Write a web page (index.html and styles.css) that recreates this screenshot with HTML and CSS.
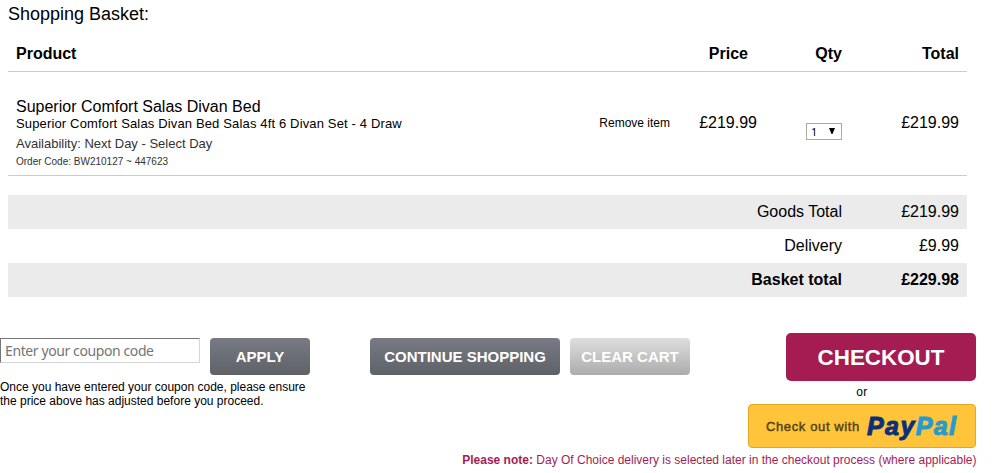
FILE: index.html
```html
<!DOCTYPE html>
<html lang="en">
<head>
    <meta charset="UTF-8">
    <meta name="viewport" content="width=device-width, initial-scale=1.0">
    <title>Shopping Basket</title>
    <link rel="stylesheet" href="styles.css">
</head>
<body>
    <div class="basket">
        <h1><span class="title">Shopping Basket:</span></h1>
        <div class="basket-row basket-head">
            <div class="product">Product</div>
            <div class="remove"></div>
            <div class="price">Price</div>
            <div class="qty">Qty</div>
            <div class="total">Total</div>
        </div>
        <div class="basket-row basket-item">
            <div class="product">
                <div class="name">Superior Comfort Salas Divan Bed</div>
                <div class="description">Superior Comfort Salas Divan Bed Salas 4ft 6 Divan Set - 4 Draw</div>
                <div class="availability">Availability: Next Day - Select Day</div>
                <div class="code">Order Code: BW210127 ~ 447623</div>
            </div>
            <div class="remove"><a href="#">Remove item</a></div>
            <div class="price">£219.99</div>
            <div class="qty">
                <div class="select">
                    <span>1</span>
                    <svg width="6" height="6" viewBox="0 0 6 6"><path d="M0 0h6L3.5 6h-1z" fill="#000"/></svg>
                </div>
            </div>
            <div class="total">£219.99</div>
        </div>
        <div class="totals">
            <div class="totals-row shaded"><span class="label">Goods Total</span><span class="amount">£219.99</span></div>
            <div class="totals-row"><span class="label">Delivery</span><span class="amount">£9.99</span></div>
            <div class="totals-row shaded grand"><span class="label">Basket total</span><span class="amount">£229.98</span></div>
        </div>
    </div>

    <div class="actions">
        <div class="coupon">
            <div class="coupon-form">
                <input type="text" placeholder="Enter your coupon code">
                <button class="btn apply"><span>APPLY</span></button>
            </div>
            <p>Once you have entered your coupon code, please ensure<br>the price above has adjusted before you proceed.</p>
        </div>
        <button class="btn continue"><span>CONTINUE SHOPPING</span></button>
        <button class="btn clear"><span>CLEAR CART</span></button>
        <div class="checkout-area">
            <button class="checkout"><span>CHECKOUT</span></button>
            <div class="or">or</div>
            <a class="paypal" href="#">
                <span class="paypal-text">Check out with</span>
                <span class="paypal-logo">Pay<span>Pal</span></span>
            </a>
        </div>
    </div>
    <div class="note"><span><b>Please note:</b> Day Of Choice delivery is selected later in the checkout process (where applicable)</span></div>
</body>
</html>
```
FILE: styles.css
```css
body {
    margin: 0;
    background-color: #fff;
    color: #000;
    font-family: "Liberation Sans", Arial, sans-serif;
    font-size: 16px;
    overflow: hidden;
}
a {
    color: #000;
    text-decoration: none;
}
button {
    padding: 0;
    border: none;
    font-family: inherit;
    font-weight: bold;
    color: #fff;
    cursor: pointer;
}

/* Basket */
.basket {
    width: 959px;
    margin-left: 8px;
}
h1 {
    margin: 0;
    padding-top: 3px;
    height: 33px;
    box-sizing: border-box;
    font-size: 18px;
    font-weight: normal;
    line-height: 22px;
}
.basket-row {
    display: grid;
    grid-template-columns: 1fr 100px 88px 84px 117px;
    padding: 0 8px;
    border-bottom: 1px solid #ccc;
}
.basket-head {
    height: 38px;
    line-height: 41px;
    font-weight: bold;
}
.basket-item {
    height: 103px;
}
.remove {
    font-size: 12px;
    line-height: 102px;
    text-align: right;
}
.price {
    text-align: right;
}
.basket-head .price {
    padding-right: 10px;
}
.basket-item .price {
    padding-right: 1px;
}
.qty,
.total {
    text-align: right;
}
.basket-item .price,
.basket-item .total {
    line-height: 101px;
}
.basket-item .qty {
    display: flex;
    justify-content: flex-end;
    padding-top: 51px;
}
.name {
    margin-top: 25px;
    line-height: 19px;
}
.description {
    font-size: 13px;
    line-height: 15px;
    letter-spacing: 0.15px;
}
.availability {
    margin-top: 3px;
    color: #333;
    font-size: 13px;
    line-height: 19px;
}
.code {
    color: #333;
    font-size: 10px;
    line-height: 17px;
}
.select {
    display: flex;
    box-sizing: border-box;
    width: 36px;
    height: 17px;
    padding: 0 6px 0 4px;
    justify-content: space-between;
    border: 1px solid #a9a9a9;
    font-family: "Noto Sans", sans-serif;
    font-size: 11px;
    line-height: 16px;
}
.select svg {
    margin-top: 4px;
}

/* Totals */
.totals {
    margin-top: 19px;
}
.totals-row {
    display: flex;
    justify-content: flex-end;
    height: 34px;
    padding-right: 8px;
    line-height: 33px;
}
.shaded {
    background-color: #ebebeb;
}
.grand {
    font-weight: bold;
}
.amount {
    width: 117px;
    text-align: right;
}

/* Buttons below the basket */
.actions {
    display: flex;
    align-items: flex-start;
    width: 976px;
    height: 115px;
    margin-top: 36px;
}
.coupon {
    width: 370px;
    padding-top: 5px;
}
.coupon-form {
    display: flex;
    align-items: flex-start;
    gap: 10px;
}
.coupon input {
    box-sizing: border-box;
    width: 200px;
    height: 25px;
    padding: 0 4px;
    border: 1px solid #d5d5d5;
    border-top-color: #767676;
    border-left-color: #767676;
    font-family: "Noto Sans", sans-serif;
    font-size: 14px;
    letter-spacing: -0.4px;
}
.coupon input::placeholder {
    color: #757575;
}
.coupon p {
    margin: 5px 0 0;
    font-size: 12px;
    line-height: 14px;
}
.btn {
    height: 37px;
    border-radius: 4px;
    background: linear-gradient(#787b84, #5f6168);
    font-size: 15px;
}
.apply {
    width: 100px;
}
.continue {
    width: 190px;
    margin: 5px 10px 0 0;
}
.clear {
    width: 120px;
    margin-top: 5px;
    background: linear-gradient(#dedede, #acacac);
}
.checkout-area {
    display: flex;
    flex-direction: column;
    align-items: flex-end;
    width: 228px;
    margin-left: auto;
}
.checkout {
    width: 190px;
    height: 48px;
    padding-top: 2px;
    border-radius: 5px;
    background-color: #a51c53;
    font-size: 22.4px;
}
.or {
    width: 100%;
    height: 23px;
    font-size: 12px;
    line-height: 22px;
    text-align: center;
    letter-spacing: 0.5px;
}
.paypal {
    display: flex;
    align-items: center;
    box-sizing: border-box;
    width: 228px;
    height: 44px;
    padding-left: 17px;
    border: 1px solid #e5a626;
    border-radius: 4px;
    background-color: #ffc439;
}
.paypal-text {
    width: 101px;
    color: #51401c;
    font-size: 13px;
    letter-spacing: 0.62px;
    -webkit-text-stroke: 0.4px #51401c;
    white-space: nowrap;
}
.paypal-logo {
    color: #0c2f7c;
    font-size: 25px;
    font-style: italic;
    font-weight: bold;
    letter-spacing: 1.4px;
    line-height: 38px;
    -webkit-text-stroke: 1px currentColor;
}
.paypal-logo span {
    color: #259bd2;
}
.note {
    width: 976.5px;
    padding-top: 3px;
    color: #a51c53;
    font-size: 12px;
    line-height: 18px;
    text-align: right;
}
```
